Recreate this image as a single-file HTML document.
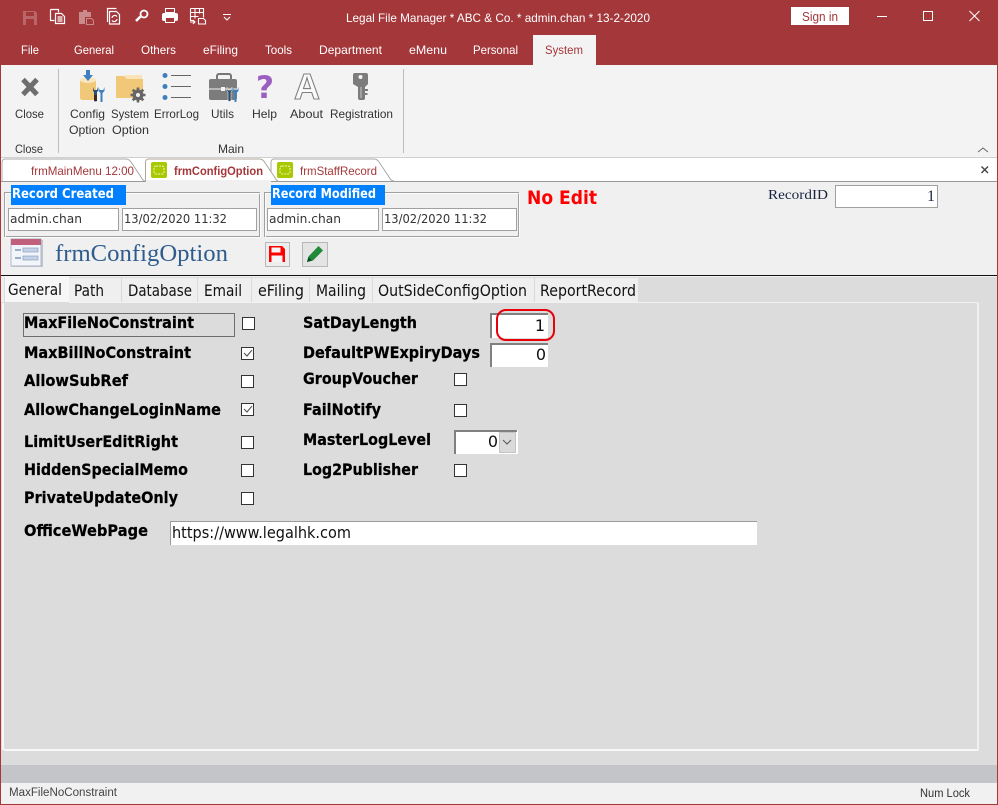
<!DOCTYPE html>
<html>
<head>
<meta charset="utf-8">
<title>Legal File Manager</title>
<style>
html,body{margin:0;padding:0;background:#F0F0F0;width:998px;height:805px;overflow:hidden}
svg{display:block}
text{white-space:pre}
.s{font-family:"Liberation Sans",sans-serif;font-size:12px;fill:#333}
.m{font-family:"Liberation Sans",sans-serif;font-size:12px;fill:#fff}
.t{font-family:"DejaVu Sans",sans-serif;font-size:12px;fill:#333}
.b{font-family:"DejaVu Sans",sans-serif;font-weight:bold;font-size:16px;fill:#000;stroke:#000;stroke-width:.25px}
.r{font-family:"DejaVu Sans",sans-serif;font-size:16px;fill:#111}
.d{font-family:"Liberation Sans",sans-serif;font-size:12px;fill:#A4373A}
</style>
</head>
<body>
<svg width="998" height="805" viewBox="0 0 998 805" xmlns="http://www.w3.org/2000/svg">
<!-- base -->
<rect width="998" height="805" fill="#F0F0F0"/>
<rect width="998" height="65" fill="#A4373A"/>
<rect x="0" y="65" width="998" height="92" fill="#F3F3F3"/>
<rect x="533" y="35" width="63" height="30" fill="#F3F3F3"/>

<!-- quick access -->
<path d="M23 11h12l2 2v12H23z" fill="#B86668"/><rect x="26" y="12" width="8" height="4" fill="#A4373A"/><rect x="26" y="19" width="8" height="6" fill="#A4373A"/>
<g fill="none" stroke="#fff" stroke-width="1.2">
<path d="M50.500 9.500h8v3M50.500 9.500v11h4"/><path d="M55.500 13.500h6l3 3v7h-9z"/><path d="M57.500 17h5M57.500 19h5M57.500 21h5"/>
<path d="M107.500 22V8.500h9M109.500 11.500h7l3 3V24h-10z"/><path d="M112 18a2.800 2.800 0 0 1 5-1.500M117 19a2.800 2.800 0 0 1-5 1.500"/>
<path d="M136 21l4.500-4.500" stroke-width="2.600"/><circle cx="144" cy="14" r="3.500" stroke-width="1.800"/>
</g>
<path d="M79 12h4v-2h4v2h4v5h-6v7h-6z" fill="#C98A8C"/>
<path d="M86.500 18.500h5l2 2v4h-7z" fill="none" stroke="#C98A8C"/>
<rect x="162" y="13" width="16" height="8" rx="2" fill="#fff"/><rect x="165.500" y="8.500" width="9" height="4" fill="none" stroke="#fff"/><rect x="165.500" y="17.500" width="9" height="5" fill="#A4373A" stroke="#fff"/>
<g fill="none" stroke="#fff" stroke-width="1.100">
<path d="M190.500 8.500h13v9M190.500 8.500v12h3M190.500 12.500h13M190.500 16.500h8M195 8.500v10M199.500 8.500v5"/>
<path d="M198.500 18.500h5l2 2v3.500h-7zM190 22h5M193 20l2 2-2 2"/>
<path d="M223 14.500h8M224 17l3 3 3-3"/>
</g>

<text class="m" x="346" y="22" textLength="304" lengthAdjust="spacingAndGlyphs">Legal File Manager * ABC &amp; Co. * admin.chan * 13-2-2020</text>
<rect x="791" y="7" width="58" height="18" fill="#fff"/>
<text class="d" x="802" y="21" textLength="36" lengthAdjust="spacingAndGlyphs" style="font-size:13px">Sign in</text>
<rect x="877" y="16" width="10" height="1" fill="#fff"/>
<rect x="923.500" y="11.500" width="9" height="9" fill="none" stroke="#fff"/>
<path d="M969.500 11l10 10M979.500 11l-10 10" stroke="#fff" fill="none"/>

<!-- menu -->
<text class="m" x="21" y="54" textLength="18" lengthAdjust="spacingAndGlyphs">File</text>
<text class="m" x="74" y="54" textLength="40" lengthAdjust="spacingAndGlyphs">General</text>
<text class="m" x="141" y="54" textLength="35" lengthAdjust="spacingAndGlyphs">Others</text>
<text class="m" x="203" y="54" textLength="35" lengthAdjust="spacingAndGlyphs">eFiling</text>
<text class="m" x="265" y="54" textLength="27" lengthAdjust="spacingAndGlyphs">Tools</text>
<text class="m" x="319" y="54" textLength="63" lengthAdjust="spacingAndGlyphs">Department</text>
<text class="m" x="409" y="54" textLength="38" lengthAdjust="spacingAndGlyphs">eMenu</text>
<text class="m" x="473" y="54" textLength="45" lengthAdjust="spacingAndGlyphs">Personal</text>
<text class="d" x="545" y="54" textLength="38" lengthAdjust="spacingAndGlyphs">System</text>

<!-- ribbon icons -->
<path d="M23 79.500l14 15M37 79.500L23 94.500" stroke="#6E6E6E" stroke-width="5" fill="none"/>
<!-- config -->
<path d="M80 80h16v18a3 2 0 0 1-3 2H83a3 2 0 0 1-3-2z" fill="#F0C878"/>
<ellipse cx="88" cy="80" rx="8" ry="3" fill="#F8E6BE"/>
<path d="M86 70h4v5h3l-5 6-5-6h3z" fill="#3F7FBF"/>
<path d="M93 87v4l1 1v8a1.500 1.500 0 0 0 3 0v-8l1-1v-4l-1 3h-3z" fill="#2F4F70"/>
<rect x="94" y="95" width="3" height="6" fill="#3A2A20"/>
<path d="M98.500 87v4l2 2v9h2v-9l2-2v-4l-1.200 3h-3.600z" fill="#3F7FBF"/>
<!-- folder -->
<path d="M116 76h8l3 3h16v19h-27z" fill="#F0C878"/><path d="M124 75h18v4h-15z" fill="#F8E4B8"/>
<circle cx="138" cy="95" r="5.500" fill="#666"/>
<path d="M138 87.500v15M130.500 95h15M132.700 89.700l10.600 10.600M143.300 89.700l-10.600 10.600" stroke="#666" stroke-width="2.600"/>
<circle cx="138" cy="95" r="2" fill="#F3F3F3"/>
<!-- list -->
<g fill="#3F7FBF"><circle cx="165" cy="75.500" r="2.500"/><circle cx="165" cy="86.500" r="2.500"/><circle cx="165" cy="97.500" r="2.500"/></g>
<path d="M171 75.500h20M171 86.500h20M171 97.500h20" stroke="#666" fill="none"/>
<!-- briefcase -->
<path d="M217 79v-3a2 2 0 0 1 2-2h10a2 2 0 0 1 2 2v3" fill="none" stroke="#777" stroke-width="2"/>
<rect x="209" y="79" width="28" height="21" rx="2" fill="#7C7C7C"/>
<rect x="209" y="88.500" width="28" height="1" fill="#F3F3F3"/>
<rect x="221" y="87" width="4" height="4" fill="#F3F3F3"/>
<path d="M227 87v4l1 1v8a1.500 1.500 0 0 0 3 0v-8l1-1v-4l-1 3h-3z" fill="#2F4F70" stroke="#F3F3F3" stroke-width=".5"/>
<path d="M232.500 87v4l2 2v9h2v-9l2-2v-4l-1.200 3h-3.600z" fill="#3F7FBF"/>
<!-- help -->
<text x="265" y="98" text-anchor="middle" style="font-family:'DejaVu Sans',sans-serif;font-weight:bold;font-size:31px;fill:#9A5FC0">?</text>
<!-- about -->
<text x="307" y="99" text-anchor="middle" style="font-family:'Liberation Sans',sans-serif;font-weight:bold;font-size:36px;fill:#FBFBFB;stroke:#808080;stroke-width:1.100px">A</text>
<!-- key -->
<path d="M353 75a2 2 0 0 1 2-2h11a2 2 0 0 1 2 2v9l-3 3v11a2 2 0 0 1-1 2h-4a2 2 0 0 1-2-2V87l-5-3z" fill="#7C7C7C"/>
<circle cx="360.500" cy="77" r="2" fill="#F3F3F3"/>
<path d="M365 90h3M365 94h2.500" stroke="#7C7C7C" stroke-width="2"/>
<path d="M361 87v11" stroke="#C8C8C8"/>

<rect x="58" y="69" width="1" height="84" fill="#BDBDBD"/>
<rect x="403" y="69" width="1" height="84" fill="#BDBDBD"/>

<text class="s" x="15" y="118" textLength="29" lengthAdjust="spacingAndGlyphs">Close</text>
<text class="s" x="70" y="118" textLength="35" lengthAdjust="spacingAndGlyphs">Config</text>
<text class="s" x="69" y="134" textLength="36" lengthAdjust="spacingAndGlyphs">Option</text>
<text class="s" x="111" y="118" textLength="38" lengthAdjust="spacingAndGlyphs">System</text>
<text class="s" x="112" y="134" textLength="37" lengthAdjust="spacingAndGlyphs">Option</text>
<text class="s" x="154" y="118" textLength="45" lengthAdjust="spacingAndGlyphs">ErrorLog</text>
<text class="s" x="211" y="118" textLength="23" lengthAdjust="spacingAndGlyphs">Utils</text>
<text class="s" x="252" y="118" textLength="25" lengthAdjust="spacingAndGlyphs">Help</text>
<text class="s" x="290" y="118" textLength="33" lengthAdjust="spacingAndGlyphs">About</text>
<text class="s" x="330" y="118" textLength="63" lengthAdjust="spacingAndGlyphs">Registration</text>
<text class="s" x="15" y="153" textLength="28" lengthAdjust="spacingAndGlyphs">Close</text>
<text class="s" x="218" y="153" textLength="26" lengthAdjust="spacingAndGlyphs">Main</text>
<path d="M978 152l5-4 5 4" fill="none" stroke="#666"/>

<!-- document tabs -->
<rect x="0" y="157" width="998" height="1" fill="#D0D0D0"/>
<rect x="0" y="158" width="998" height="23" fill="#fff"/>
<rect x="0" y="181" width="998" height="1" fill="#9A9A9A"/>
<path d="M271 181v-19a3 3 0 0 1 3-3h100q3 0 5 3l10 15q2 4 5 4" fill="#fff" stroke="#A8A8A8"/>
<path d="M2 181v-19a3 3 0 0 1 3-3h121q3 0 5 3l10 15q2 4 4 4" fill="#fff" stroke="#A8A8A8"/>
<path d="M145.500 181v-19a3 3 0 0 1 3-3h111q3 0 5 3l10 15q2 4 4 4" fill="#fff" stroke="#B0A498"/>
<rect x="146" y="180" width="125" height="2" fill="#F0F0F0"/>
<rect x="151" y="162" width="16" height="16" rx="2" fill="#A8C800"/>
<rect x="154" y="166" width="10" height="8" rx="2" fill="none" stroke="#F0F8C0" stroke-dasharray="2 1"/>
<rect x="277" y="162" width="16" height="16" rx="2" fill="#A8C800"/>
<rect x="280" y="166" width="10" height="8" rx="2" fill="none" stroke="#F0F8C0" stroke-dasharray="2 1"/>
<text class="d" x="31" y="175" textLength="103" lengthAdjust="spacingAndGlyphs">frmMainMenu 12:00</text>
<text class="d" x="174" y="175" textLength="89" lengthAdjust="spacingAndGlyphs" style="font-weight:bold">frmConfigOption</text>
<text class="d" x="300" y="175" textLength="77" lengthAdjust="spacingAndGlyphs">frmStaffRecord</text>
<path d="M981.500 166.500l6.500 6.500M988 166.500l-6.500 6.500" stroke="#444" stroke-width="1.400" fill="none"/>

<!-- record created -->
<rect x="4.500" y="192.500" width="255" height="44" fill="none" stroke="#A0A0A0"/>
<rect x="5.500" y="193.500" width="255" height="44" fill="none" stroke="#fff" opacity=".8"/>
<rect x="11" y="185" width="115" height="20" fill="#0080FF"/>
<text x="12" y="198" textLength="102" lengthAdjust="spacingAndGlyphs" style="font-family:'DejaVu Sans',sans-serif;font-weight:bold;font-size:13px;fill:#fff">Record Created</text>
<rect x="8.500" y="208.500" width="110" height="22" fill="#fff" stroke="#A0A0A0"/>
<rect x="122.500" y="208.500" width="134" height="22" fill="#fff" stroke="#A0A0A0"/>
<text class="t" x="10" y="223" textLength="72" lengthAdjust="spacingAndGlyphs">admin.chan</text>
<text class="t" x="124" y="223" textLength="103" lengthAdjust="spacingAndGlyphs">13/02/2020 11:32</text>

<rect x="264.500" y="192.500" width="254" height="44" fill="none" stroke="#A0A0A0"/>
<rect x="265.500" y="193.500" width="254" height="44" fill="none" stroke="#fff" opacity=".8"/>
<rect x="271" y="185" width="114" height="20" fill="#0080FF"/>
<text x="272" y="198" textLength="104" lengthAdjust="spacingAndGlyphs" style="font-family:'DejaVu Sans',sans-serif;font-weight:bold;font-size:13px;fill:#fff">Record Modified</text>
<rect x="267.500" y="208.500" width="111" height="22" fill="#fff" stroke="#A0A0A0"/>
<rect x="382.500" y="208.500" width="134" height="22" fill="#fff" stroke="#A0A0A0"/>
<text class="t" x="269" y="223" textLength="72" lengthAdjust="spacingAndGlyphs">admin.chan</text>
<text class="t" x="384" y="223" textLength="103" lengthAdjust="spacingAndGlyphs">13/02/2020 11:32</text>

<text x="527" y="204" textLength="70" lengthAdjust="spacingAndGlyphs" style="font-family:'DejaVu Sans',sans-serif;font-weight:bold;font-size:19px;fill:#FF0000">No Edit</text>
<text x="768" y="199" textLength="60" lengthAdjust="spacingAndGlyphs" style="font-family:'Liberation Serif',serif;font-size:14px;fill:#1A2440">RecordID</text>
<rect x="835.500" y="185.500" width="102" height="22" fill="#fff" stroke="#A0A0A0"/>
<text x="935" y="201" text-anchor="end" style="font-family:'Liberation Serif',serif;font-size:16px;fill:#1A2440">1</text>

<!-- form heading -->
<rect x="12" y="240" width="31" height="27" fill="#8C9AAE" opacity=".5"/>
<rect x="11" y="239" width="30" height="27" fill="#F2F5FA" stroke="#B0B8C8"/>
<rect x="11" y="239" width="30" height="6" fill="#C0607A"/>
<path d="M15 250h6M15 258h6" stroke="#7F97BA" stroke-width="1.500"/>
<rect x="23" y="248" width="15" height="4" fill="#C6D3E6" stroke="#7F97BA" stroke-width=".6"/>
<rect x="23" y="256" width="15" height="4" fill="#C6D3E6" stroke="#7F97BA" stroke-width=".6"/>
<text x="55" y="261" textLength="173" lengthAdjust="spacingAndGlyphs" style="font-family:'Liberation Serif',serif;font-size:24px;fill:#2F5C8F">frmConfigOption</text>
<rect x="265.500" y="242.500" width="24" height="24" fill="#EDEDED" stroke="#B8B8B8"/>
<path d="M269 246h13l3 3v13h-16z" fill="#FF0000"/><rect x="271.500" y="247.500" width="9" height="5" fill="#F4F4F4"/><rect x="271.500" y="255.500" width="11" height="6.500" fill="#F4F4F4"/>
<rect x="302.500" y="242.500" width="25" height="24" fill="#E4E4E4" stroke="#B8B8B8"/>
<path d="M307 262l1.500-5.500 10-10.500 4.500 4.500-10 10z" fill="#1E8A3A"/><path d="M307 262l1.500-5 3.500 3.500z" fill="#0B4A1E"/>

<!-- divider + tab control -->
<rect x="0" y="275" width="998" height="1" fill="#111"/>
<rect x="4" y="277" width="994" height="28" fill="#DCDCDC"/>
<rect x="69" y="278" width="569" height="24" fill="#EFEFEF"/>
<path d="M121.500 278v24M197.500 278v24M251.500 278v24M309.500 278v24M372.500 278v24M534.500 278v24" stroke="#DADADA"/>
<rect x="5" y="276" width="64" height="27" fill="#F7F7F7"/>
<text class="r" x="8" y="295" textLength="54" lengthAdjust="spacingAndGlyphs">General</text>
<text class="r" x="74" y="296" textLength="30" lengthAdjust="spacingAndGlyphs">Path</text>
<text class="r" x="128" y="296" textLength="64" lengthAdjust="spacingAndGlyphs">Database</text>
<text class="r" x="204" y="296" textLength="38" lengthAdjust="spacingAndGlyphs">Email</text>
<text class="r" x="258" y="296" textLength="46" lengthAdjust="spacingAndGlyphs">eFiling</text>
<text class="r" x="316" y="296" textLength="50" lengthAdjust="spacingAndGlyphs">Mailing</text>
<text class="r" x="378" y="296" textLength="149" lengthAdjust="spacingAndGlyphs">OutSideConfigOption</text>
<text class="r" x="540" y="296" textLength="96" lengthAdjust="spacingAndGlyphs">ReportRecord</text>

<!-- page body -->
<rect x="0" y="302" width="998" height="463" fill="#DCDCDC"/>
<rect x="69" y="302" width="909" height="1" fill="#F2F2F2"/>
<rect x="2" y="303" width="2" height="447" fill="#F7F7F7"/>
<rect x="4" y="749" width="974" height="2" fill="#F7F7F7"/>
<rect x="977" y="303" width="2" height="448" fill="#F0F0F0"/>

<rect x="23.500" y="313.500" width="211" height="23" fill="none" stroke="#000" stroke-dasharray="1 1" shape-rendering="crispEdges"/>

<text class="b" x="24" y="328" textLength="170" lengthAdjust="spacingAndGlyphs">MaxFileNoConstraint</text>
<text class="b" x="24" y="358" textLength="167" lengthAdjust="spacingAndGlyphs">MaxBillNoConstraint</text>
<text class="b" x="24" y="386" textLength="104" lengthAdjust="spacingAndGlyphs">AllowSubRef</text>
<text class="b" x="24" y="415" textLength="197" lengthAdjust="spacingAndGlyphs">AllowChangeLoginName</text>
<text class="b" x="24" y="447" textLength="154" lengthAdjust="spacingAndGlyphs">LimitUserEditRight</text>
<text class="b" x="24" y="475" textLength="164" lengthAdjust="spacingAndGlyphs">HiddenSpecialMemo</text>
<text class="b" x="24" y="503" textLength="154" lengthAdjust="spacingAndGlyphs">PrivateUpdateOnly</text>
<text class="b" x="24" y="536" textLength="124" lengthAdjust="spacingAndGlyphs">OfficeWebPage</text>

<g fill="#fff" stroke="#333">
<rect x="242.500" y="317.500" width="12" height="12"/>
<rect x="241.500" y="347.500" width="12" height="12"/>
<rect x="241.500" y="375.500" width="12" height="12"/>
<rect x="241.500" y="403.500" width="12" height="12"/>
<rect x="241.500" y="436.500" width="12" height="12"/>
<rect x="241.500" y="464.500" width="12" height="12"/>
<rect x="241.500" y="492.500" width="12" height="12"/>
<rect x="454.500" y="373.500" width="12" height="12"/>
<rect x="454.500" y="404.500" width="12" height="12"/>
<rect x="454.500" y="464.500" width="12" height="12"/>
</g>
<path d="M244 353l3 3 5-6M244 409l3 3 5-6" fill="none" stroke="#555" stroke-width="1.100"/>

<rect x="170" y="521" width="587" height="24" fill="#fff"/>
<path d="M170.500 545v-23.500H757" fill="none" stroke="#9A9A9A"/>
<text class="r" x="172" y="538" textLength="179" lengthAdjust="spacingAndGlyphs">https://www.legalhk.com</text>

<text class="b" x="303" y="328" textLength="114" lengthAdjust="spacingAndGlyphs">SatDayLength</text>
<text class="b" x="303" y="358" textLength="177" lengthAdjust="spacingAndGlyphs">DefaultPWExpiryDays</text>
<text class="b" x="303" y="384" textLength="115" lengthAdjust="spacingAndGlyphs">GroupVoucher</text>
<text class="b" x="303" y="415" textLength="78" lengthAdjust="spacingAndGlyphs">FailNotify</text>
<text class="b" x="303" y="445" textLength="128" lengthAdjust="spacingAndGlyphs">MasterLogLevel</text>
<text class="b" x="303" y="475" textLength="115" lengthAdjust="spacingAndGlyphs">Log2Publisher</text>

<rect x="490" y="313" width="58" height="25" fill="#fff"/>
<path d="M491 338v-24H548" fill="none" stroke="#808080" stroke-width="2"/>
<text class="r" x="545" y="331" text-anchor="end">1</text>
<rect x="490" y="343" width="58" height="24" fill="#fff"/>
<path d="M491 367v-23H548" fill="none" stroke="#808080" stroke-width="2"/>
<text class="r" x="546" y="360" text-anchor="end">0</text>
<rect x="497" y="310" width="57" height="30" rx="9" fill="none" stroke="#E8000B" stroke-width="2"/>

<rect x="454" y="430" width="64" height="24" fill="#fff"/>
<path d="M455 454v-23H517" fill="none" stroke="#808080" stroke-width="2"/>
<text class="r" x="498" y="447" text-anchor="end">0</text>
<rect x="499.500" y="432.500" width="16" height="20" fill="#DADADA" stroke="#AAA" stroke-width=".6"/>
<path d="M503 440l4 4 4-4" fill="none" stroke="#555"/>

<!-- footer -->
<rect x="0" y="765" width="998" height="18" fill="#C4C5C8"/>
<rect x="0" y="783" width="998" height="21" fill="#F1F1F1"/>
<text class="s" x="9" y="796" textLength="108" lengthAdjust="spacingAndGlyphs" style="font-size:11.500px;fill:#444">MaxFileNoConstraint</text>
<text class="s" x="920" y="797" textLength="50" lengthAdjust="spacingAndGlyphs" style="font-size:11.500px;fill:#333">Num Lock</text>

<!-- window border -->
<rect x="0" y="0" width="1" height="805" fill="#A4373A"/>
<rect x="997" y="0" width="1" height="805" fill="#A4373A"/>
<rect x="0" y="804" width="998" height="1" fill="#A4373A"/>
</svg>
</body>
</html>
